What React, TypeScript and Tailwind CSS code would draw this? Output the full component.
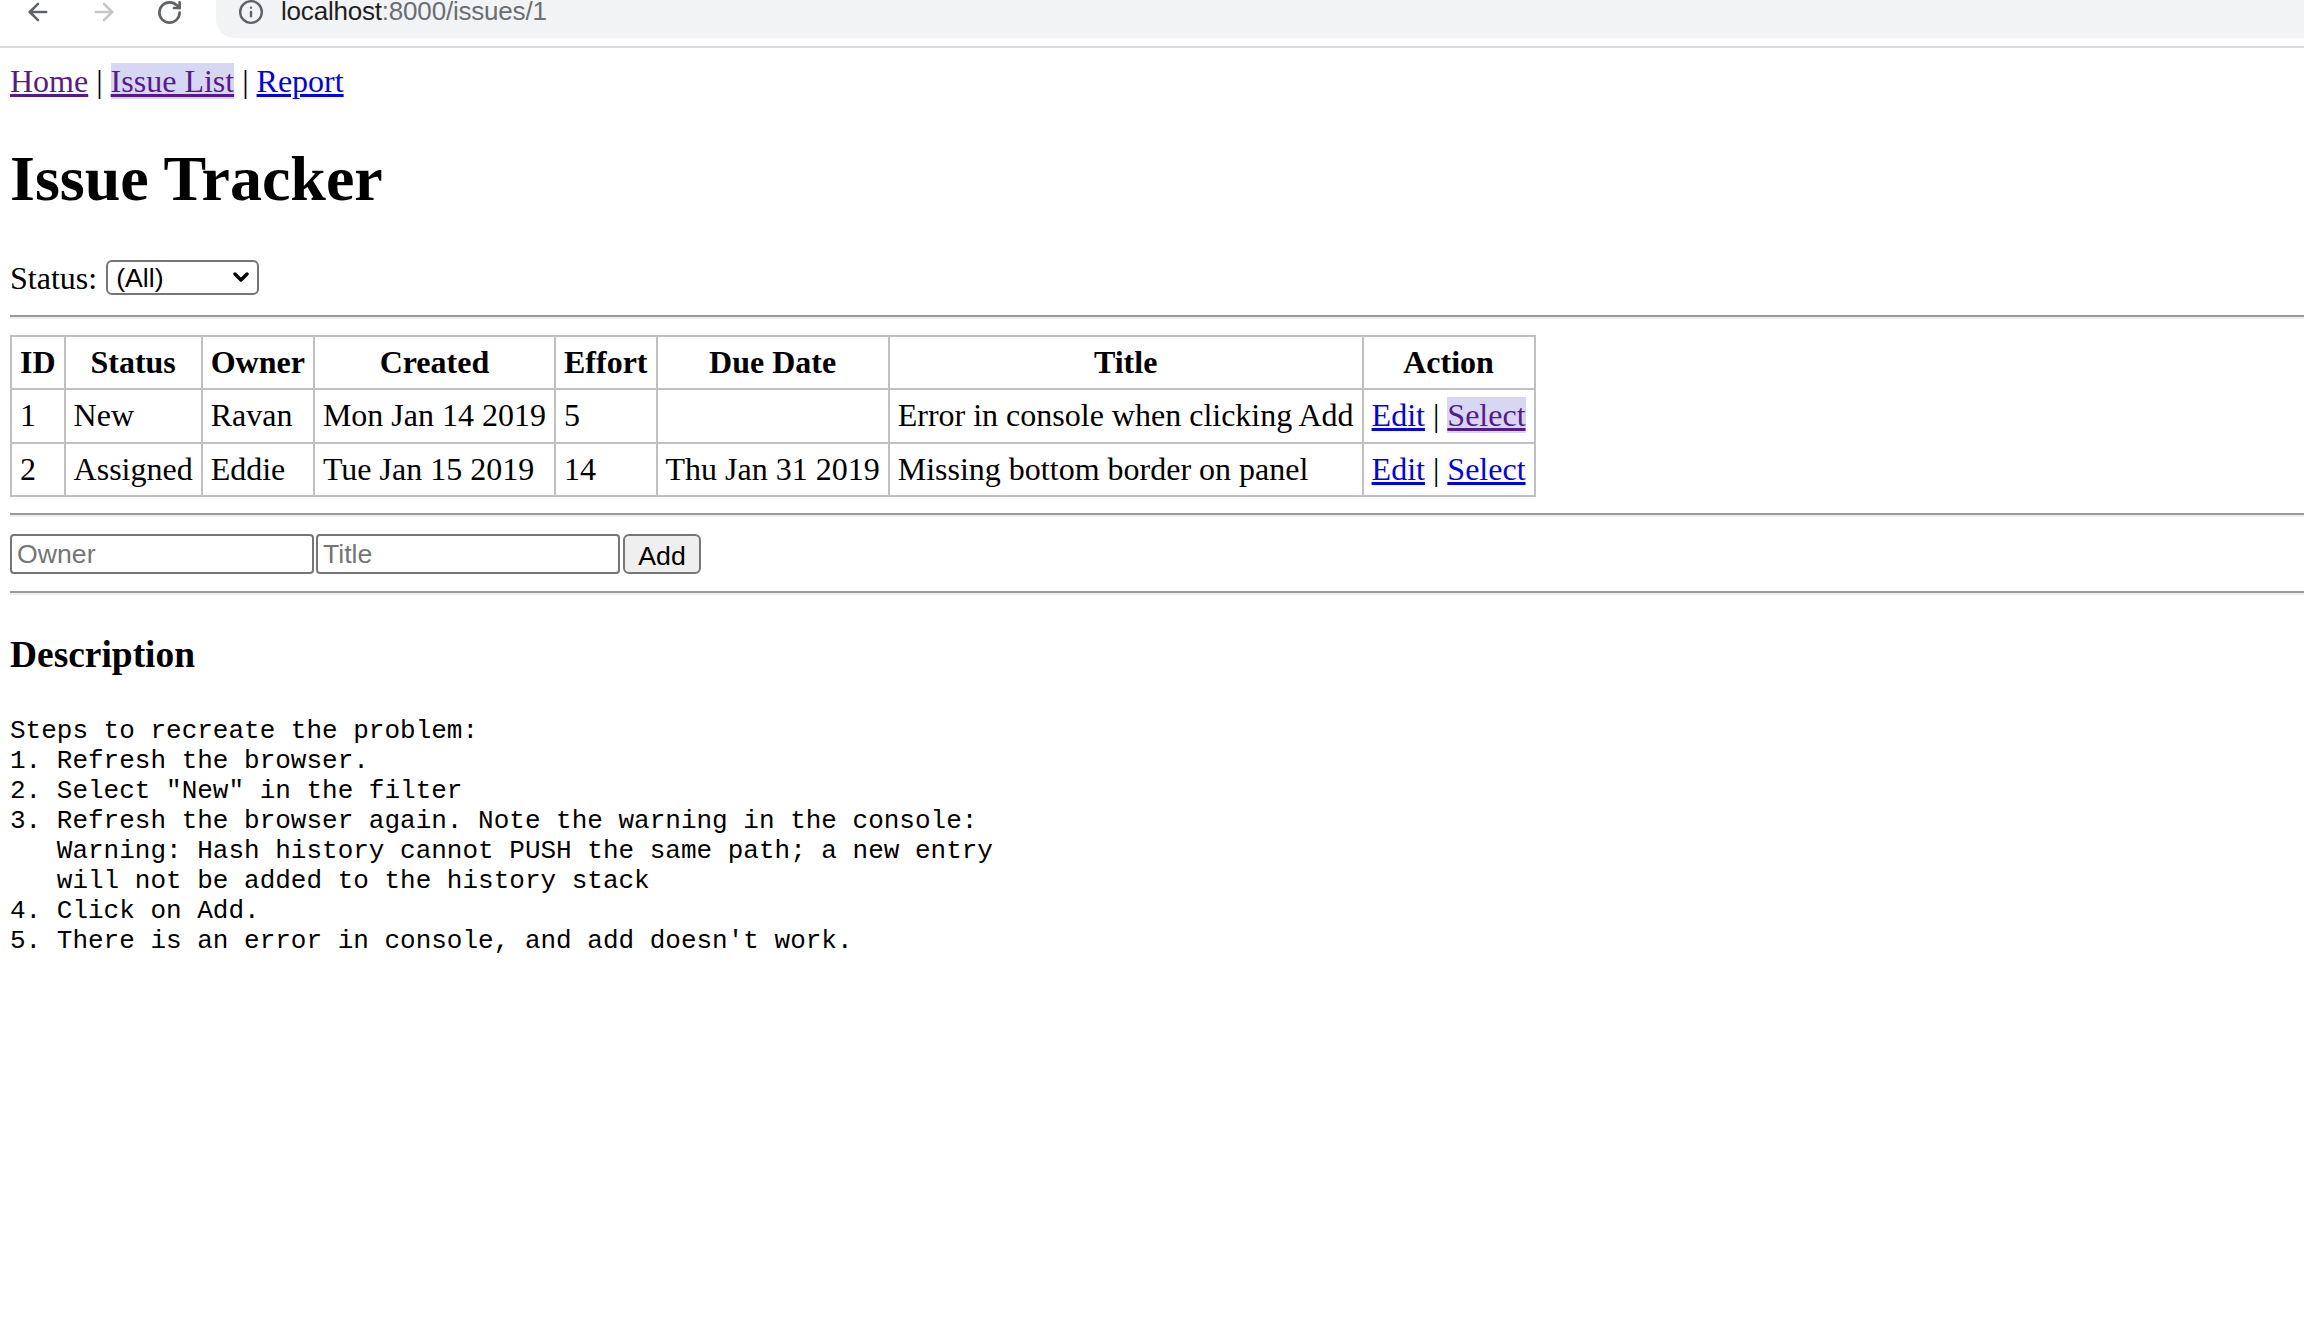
import { ArrowLeft, ArrowRight, RotateCw, Info } from 'lucide-react';

type Issue = {
  id: number;
  status: string;
  owner: string;
  created: string;
  effort: string;
  due: string;
  title: string;
};

const issues: Issue[] = [
  { id: 1, status: 'New', owner: 'Ravan', created: 'Mon Jan 14 2019', effort: '5', due: '', title: 'Error in console when clicking Add' },
  { id: 2, status: 'Assigned', owner: 'Eddie', created: 'Tue Jan 15 2019', effort: '14', due: 'Thu Jan 31 2019', title: 'Missing bottom border on panel' },
];

const description = `Steps to recreate the problem:
1. Refresh the browser.
2. Select "New" in the filter
3. Refresh the browser again. Note the warning in the console:
   Warning: Hash history cannot PUSH the same path; a new entry
   will not be added to the history stack
4. Click on Add.
5. There is an error in console, and add doesn't work.`;

const headers = ['ID', 'Status', 'Owner', 'Created', 'Effort', 'Due Date', 'Title', 'Action'];

const Rule = () => (
  <div className="h-[4px] border-t-2 border-b-2 border-t-[#9a9a9a] border-b-[#eeeeee]" />
);

const BrowserBar = () => (
  <div className="font-['Liberation_Sans',Arial,sans-serif]">
    <div className="flex h-[46px] items-start overflow-hidden">
      <div className="flex items-center h-[24px] pl-[24px] gap-[38px]">
        <ArrowLeft size={28} strokeWidth={2.2} className="text-[#5f6368]" />
        <ArrowRight size={28} strokeWidth={2.2} className="text-[#c4c7c5]" />
        <RotateCw size={27} strokeWidth={2.4} className="text-[#5f6368]" />
      </div>
      <div className="ml-[33px] flex-1 h-[38px] bg-[#f1f3f4] rounded-bl-[19px] flex items-start pl-[22px]">
        <div className="flex items-center h-[24px] gap-[17px]">
          <Info size={26} strokeWidth={2.2} className="text-[#5f6368]" />
          <div className="text-[26px] leading-[30px] -mt-[2px] tracking-[-0.2px]">
            <span className="text-[#1f1f1f]">localhost</span>
            <span className="text-[#6b6e72]">:8000/issues/1</span>
          </div>
        </div>
      </div>
    </div>
    <div className="h-[2px] bg-[#dcdce0]" />
  </div>
);

export default function App() {
  return (
    <div className="min-h-screen bg-white overflow-hidden">
      <BrowserBar />
      <div className="pl-[10px] font-['Liberation_Serif','Times_New_Roman',serif] text-[32px] text-black">
        <div className="mt-[16px] leading-[35.5px]">
          <a href="#/" className="underline text-[#551a8b]">Home</a>
          {' | '}
          <a href="#/issues" className="underline text-[#551a8b] bg-[#d8d7f3]">Issue List</a>
          {' | '}
          <a href="#/report" className="underline text-[#0000ee]">Report</a>
        </div>

        <h1 className="mt-[43px] text-[64px] font-bold leading-[71px]">Issue Tracker</h1>

        <div className="mt-[43px] h-[42px] flex items-center">
          <span>Status:</span>
          <div className="relative ml-[9px] h-[35px]">
            <select className="block appearance-none w-[153px] h-[35px] border-2 border-[#767676] rounded-[6px] bg-white pl-[8px] font-['Liberation_Sans',Arial,sans-serif] text-[26.67px] leading-[30px] text-black">
              <option>(All)</option>
              <option>New</option>
              <option>Open</option>
              <option>Assigned</option>
              <option>Fixed</option>
              <option>Verified</option>
              <option>Closed</option>
            </select>
            <svg className="pointer-events-none absolute right-[10px] top-[12px]" width="16" height="11" viewBox="0 0 16 11">
              <path d="M2 2 L8 8 L14 2" fill="none" stroke="#000" strokeWidth="3.4" strokeLinecap="round" strokeLinejoin="round" />
            </svg>
          </div>
        </div>

        <div className="mt-[16px]"><Rule /></div>

        <table className="mt-[16px] border-collapse border-2 border-[#c0c0c0] leading-[35.5px]">
          <thead>
            <tr>
              {headers.map(h => (
                <th key={h} className="border-2 border-[#c0c0c0] px-[8px] py-[8px] font-bold text-center">{h}</th>
              ))}
            </tr>
          </thead>
          <tbody>
            {issues.map((issue, i) => (
              <tr key={issue.id}>
                <td className="border-2 border-[#c0c0c0] px-[8px] py-[8px]">{issue.id}</td>
                <td className="border-2 border-[#c0c0c0] px-[8px] py-[8px]">{issue.status}</td>
                <td className="border-2 border-[#c0c0c0] px-[8px] py-[8px]">{issue.owner}</td>
                <td className="border-2 border-[#c0c0c0] px-[8px] py-[8px]">{issue.created}</td>
                <td className="border-2 border-[#c0c0c0] px-[8px] py-[8px]">{issue.effort}</td>
                <td className="border-2 border-[#c0c0c0] px-[8px] py-[8px]">{issue.due}</td>
                <td className="border-2 border-[#c0c0c0] px-[8px] py-[8px]">{issue.title}</td>
                <td className="border-2 border-[#c0c0c0] px-[8px] py-[8px] whitespace-nowrap">
                  <a href={`#/edit/${issue.id}`} className="underline text-[#0000ee]">Edit</a>
                  {' | '}
                  {i === 0 ? (
                    <a href={`#/issues/${issue.id}`} className="underline text-[#551a8b] bg-[#d8d7f3]">Select</a>
                  ) : (
                    <a href={`#/issues/${issue.id}`} className="underline text-[#0000ee]">Select</a>
                  )}
                </td>
              </tr>
            ))}
          </tbody>
        </table>

        <div className="mt-[16px]"><Rule /></div>

        <form className="mt-[16px] h-[42px] flex items-start font-['Liberation_Sans',Arial,sans-serif] text-[26.67px]" onSubmit={e => e.preventDefault()}>
          <input
            type="text"
            placeholder="Owner"
            className="mt-[1px] w-[304px] h-[40px] border-2 border-[#767676] rounded-[4px] px-[5px] placeholder:text-[#757575] outline-none"
          />
          <input
            type="text"
            placeholder="Title"
            className="mt-[1px] ml-[2px] w-[304px] h-[40px] border-2 border-[#767676] rounded-[4px] px-[5px] placeholder:text-[#757575] outline-none"
          />
          <button type="submit" className="mt-[1px] ml-[3px] w-[78px] h-[40px] border-2 border-[#767676] rounded-[6px] bg-[#efefef] text-black">
            Add
          </button>
        </form>

        <div className="mt-[16px]"><Rule /></div>

        <h3 className="mt-[39px] text-[37.44px] font-bold leading-[41.5px]">Description</h3>

        <pre className="mt-[40px] font-['Liberation_Mono','Courier_New',monospace] text-[26px] leading-[30px]">{description}</pre>
      </div>
    </div>
  );
}
